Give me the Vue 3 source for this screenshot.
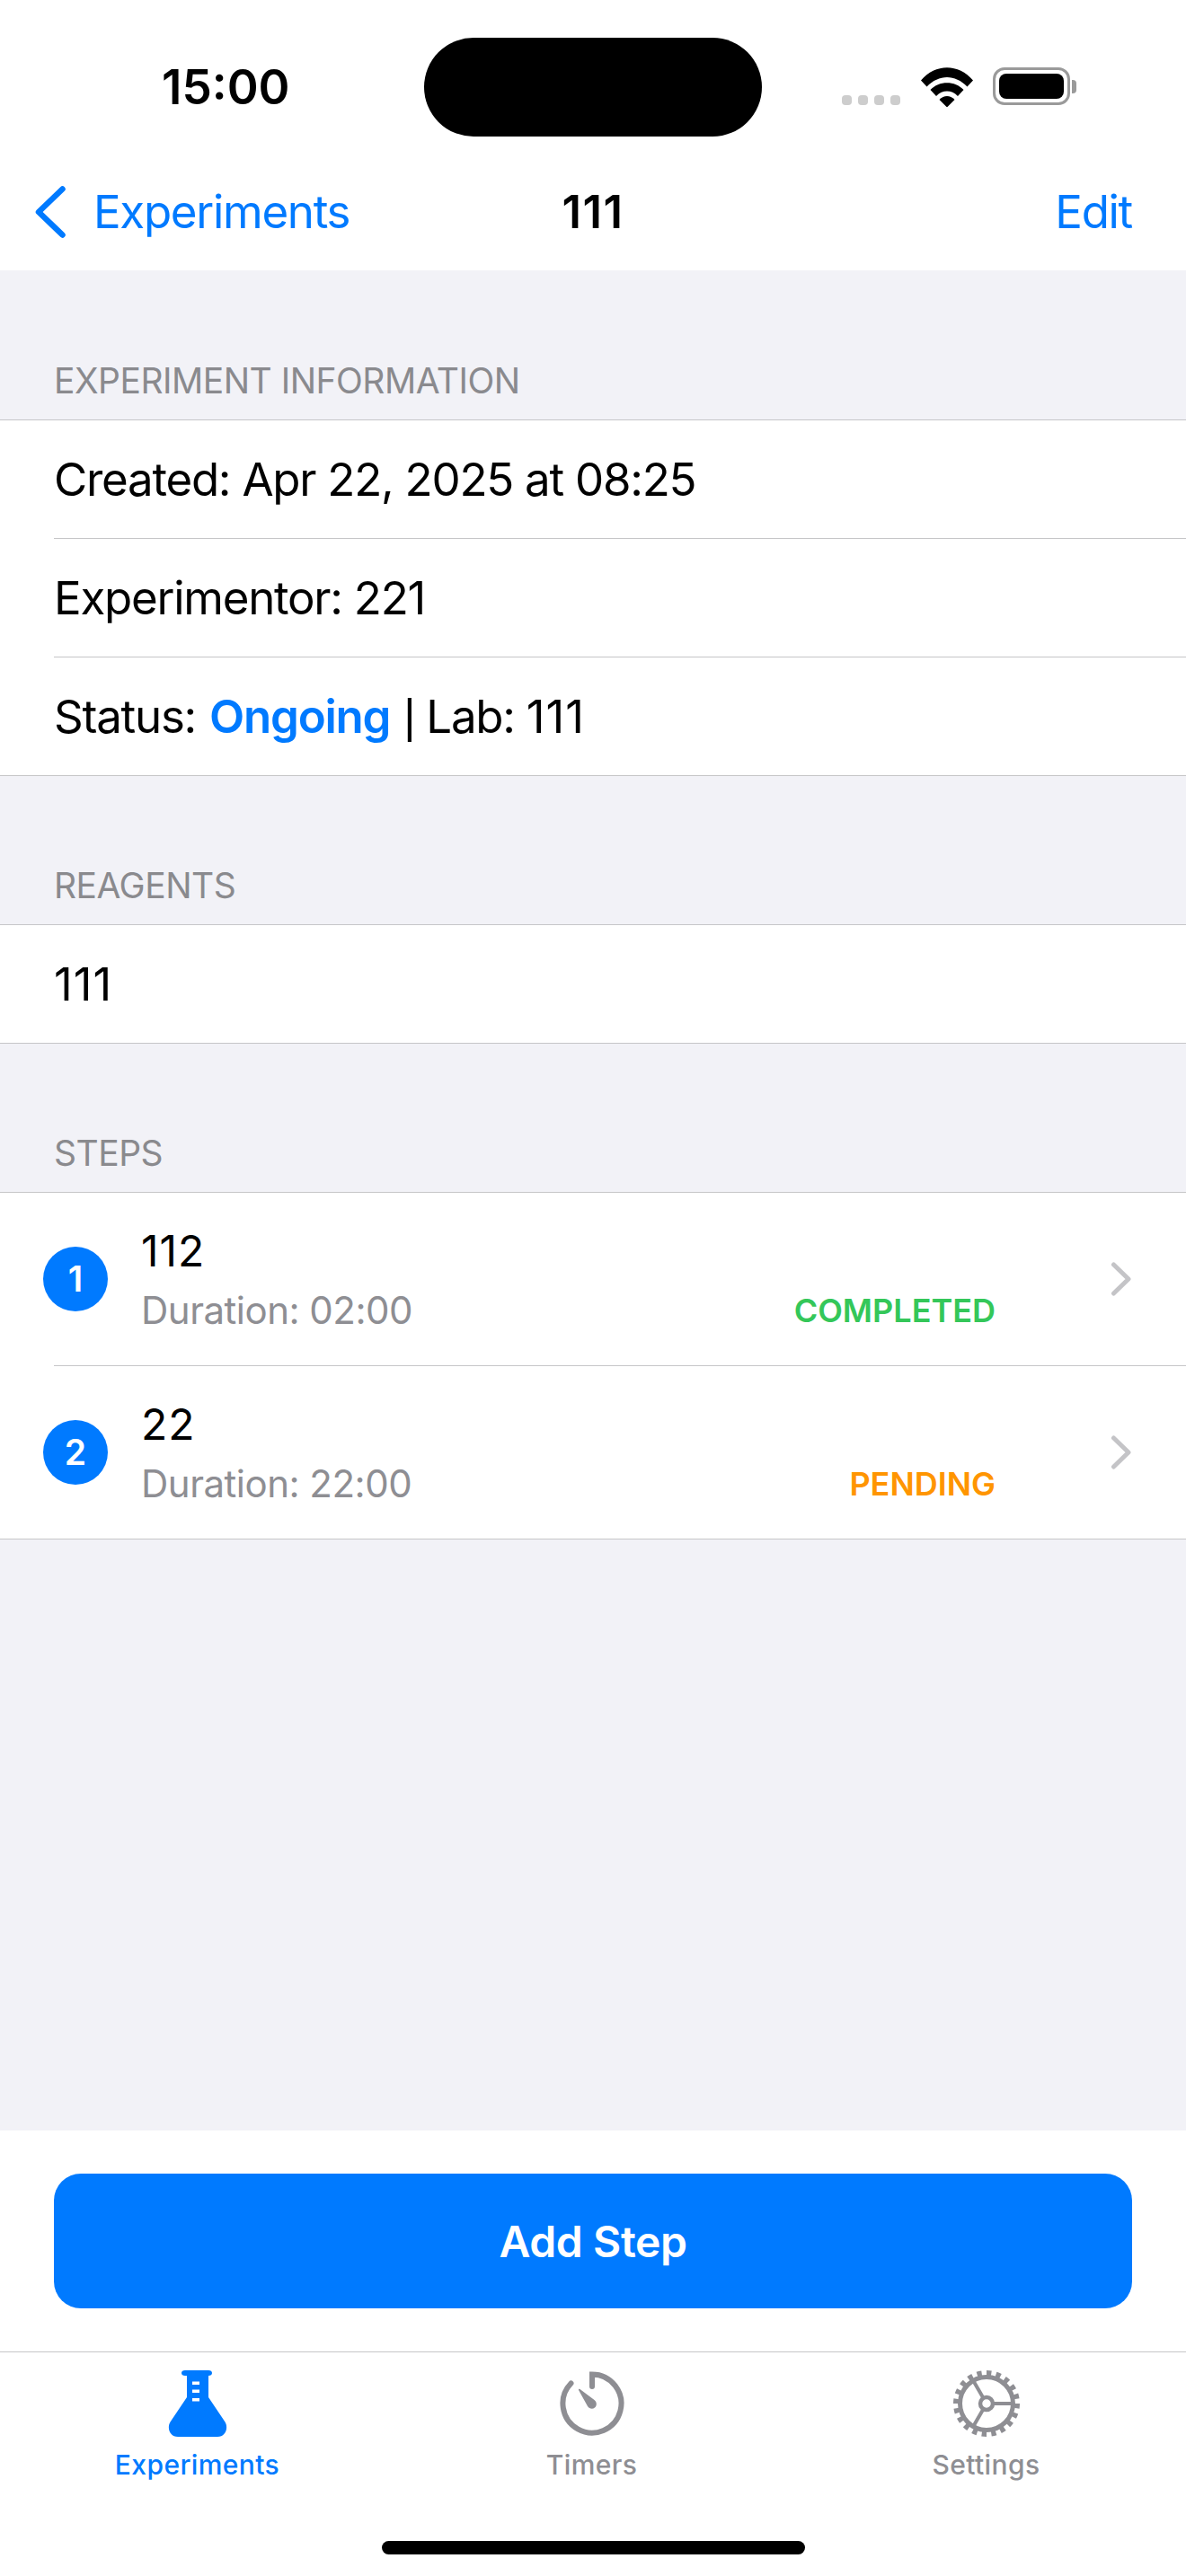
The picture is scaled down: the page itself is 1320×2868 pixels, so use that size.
<template>
  <div class="screen">
    <div class="island"></div>

    <header class="top">
      <div class="status">
        <span class="time">15:00</span>
        <div class="status-icons">
          <div class="dots"><i></i><i></i><i></i><i></i></div>
          <svg class="wifi" viewBox="0 0 58 44" width="58" height="44">
            <path d="M0 14.500 C16 -4.500 42 -4.500 58 14.500 L51.500 21.500 C38 7.500 20 7.500 6.500 21.500Z" />
            <path d="M10.500 25 C20 14.500 38 14.500 47.500 25 L41 32 C34 24.800 24 24.800 17 32Z" />
            <path d="M20.500 36 C25.500 30.500 32.500 30.500 37.500 36 L29 44.500Z" />
          </svg>
          <div class="battery">
            <div class="battery-body"><div class="battery-fill"></div></div>
            <div class="battery-cap"></div>
          </div>
        </div>
      </div>
      <nav class="navbar">
        <div class="back">
          <svg viewBox="0 0 36 58" width="36" height="58">
            <path d="M31.500 3.500 L5 29 L31.500 54.500" fill="none" stroke="#007aff" stroke-width="6.500" stroke-linecap="round" stroke-linejoin="round" />
          </svg>
          <span>Experiments</span>
        </div>
        <div class="nav-title">111</div>
        <div class="nav-edit">Edit</div>
      </nav>
    </header>

    <main class="content">
      <section class="section">
        <h2 class="section-title">EXPERIMENT INFORMATION</h2>
        <div class="group">
          <div class="row">Created: Apr 22, 2025 at 08:25</div>
          <div class="row">Experimentor: 221</div>
          <div class="row">Status:&nbsp;<strong class="ongoing">Ongoing</strong>&nbsp;<span class="pipe">|</span>&nbsp;Lab:&nbsp;<span class="ones">111</span></div>
        </div>
      </section>

      <section class="section">
        <h2 class="section-title">REAGENTS</h2>
        <div class="group">
          <div class="row ones">111</div>
        </div>
      </section>

      <section class="section">
        <h2 class="section-title">STEPS</h2>
        <div class="group">
          <div v-for="step in steps" :key="step.n" class="step">
            <div class="step-num">{{ step.n }}</div>
            <div class="step-body">
              <div class="step-name">{{ step.name }}</div>
              <div class="step-meta">
                <span class="step-duration">Duration: {{ step.duration }}</span>
                <span class="step-state" :class="step.state.toLowerCase()">{{ step.state }}</span>
              </div>
            </div>
            <svg class="step-chevron" viewBox="0 0 24 38" width="24" height="38">
              <path d="M3.500 3 L20 19 L3.500 35" fill="none" stroke="#c4c4c7" stroke-width="5" stroke-linecap="round" stroke-linejoin="round" />
            </svg>
          </div>
        </div>
      </section>
    </main>

    <div class="action">
      <button class="add-step">Add Step</button>
    </div>

    <footer class="tabbar">
      <div class="tab active">
        <svg viewBox="0 0 66 74" width="66" height="74">
          <path fill="#007aff" fill-rule="evenodd" d="M19 0 H45 C47.500 0 49 1.300 49 3 C49 4.700 47.500 6 45 6 V30 L63.500 57.500 C67.500 64 64 74 55 74 H11 C2 74 -1.500 64 2.500 57.500 L21 30 V6 H19 C16.500 6 15 4.700 15 3 C15 1.300 16.500 0 19 0Z M27 12.500 H35 V16 H27Z M27 21.500 H35 V25 H27Z M27 31 H35 V34.500 H27Z" />
        </svg>
        <span>Experiments</span>
      </div>
      <div class="tab">
        <svg viewBox="0 0 72 72" width="72" height="72">
          <path d="M12.500 13.500 A32.500 32.500 0 1 0 36 3.500 V17" fill="none" stroke="#8e8e93" stroke-width="6" stroke-linecap="round" />
          <path d="M21 21 C20.700 20 21.700 19.400 22.500 20 L38.500 32 C41.500 34.500 41.500 38.500 39 40.500 C36.500 42.500 33 42 31 39Z" fill="#8e8e93" />
        </svg>
        <span>Timers</span>
      </div>
      <div class="tab">
        <svg viewBox="0 0 76 76" width="76" height="76">
          <circle cx="38" cy="38" r="34" fill="none" stroke="#8e8e93" stroke-width="6" pathLength="40" stroke-dasharray="1 1" />
          <circle cx="38" cy="38" r="29.500" fill="none" stroke="#8e8e93" stroke-width="5" />
          <circle cx="38" cy="38" r="7" fill="none" stroke="#8e8e93" stroke-width="4.500" />
          <path d="M45 38 H67 M34.500 31.900 L23.500 12.900 M34.500 44.100 L23.500 63.100" fill="none" stroke="#8e8e93" stroke-width="4" />
        </svg>
        <span>Settings</span>
      </div>
      <div class="home-indicator"></div>
    </footer>
  </div>
</template>

<script setup>
const steps = [
  { n: 1, name: '112', duration: '02:00', state: 'COMPLETED' },
  { n: 2, name: '22', duration: '22:00', state: 'PENDING' }
]
</script>

<style>
html,
body {
  margin: 0;
  background: #fff;
}
</style>

<style scoped>
.screen {
  position: relative;
  width: 1320px;
  height: 2868px;
  display: flex;
  flex-direction: column;
  overflow: hidden;
  background: #f2f2f7;
  color: #000;
  font-family: Inter, "Noto Sans", sans-serif;
}

.island {
  position: absolute;
  left: 472px;
  top: 42px;
  width: 376px;
  height: 110px;
  border-radius: 55px;
  background: #000;
}

.top {
  height: 301px;
  background: #fff;
  flex-shrink: 0;
}

.status {
  height: 170px;
  display: flex;
  justify-content: space-between;
  padding: 0 122px 0 180px;
  box-sizing: border-box;
}

.time {
  margin-top: 65px;
  font-size: 53px;
  line-height: 64px;
  font-weight: 600;
}

.status-icons {
  display: flex;
  align-items: flex-start;
  padding-top: 75px;
}

.dots {
  display: flex;
  gap: 7px;
  margin-top: 31px;
  margin-right: 23px;
}

.dots i {
  width: 11px;
  height: 11px;
  border-radius: 4px;
  background: #cdcdcd;
}

.wifi {
  fill: #000;
  margin-right: 22px;
}

.battery {
  display: flex;
  align-items: center;
}

.battery-body {
  width: 86px;
  height: 42px;
  box-sizing: border-box;
  border: 3px solid #9a9a9a;
  border-radius: 13px;
  padding: 4px;
}

.battery-fill {
  height: 100%;
  border-radius: 8px;
  background: #000;
}

.battery-cap {
  width: 5px;
  height: 15px;
  margin-left: 2px;
  border-radius: 0 4px 4px 0;
  background: #9a9a9a;
}

.navbar {
  height: 131px;
  display: grid;
  grid-template-columns: 1fr auto 1fr;
  align-items: center;
  padding: 0 60px;
  font-size: 51px;
  letter-spacing: -1.3px;
  color: #007aff;
}

.back {
  display: flex;
  align-items: center;
  gap: 30px;
  margin-left: -22px;
}

.nav-title {
  color: #000;
  font-weight: 600;
  letter-spacing: 1.5px;
}

.nav-edit {
  text-align: right;
}

.content {
  flex: 1;
  padding-top: 99px;
}

.section {
  margin-bottom: 98px;
}

.section-title {
  margin: 0;
  padding: 0 60px;
  height: 67px;
  font-size: 39px;
  line-height: 48px;
  font-weight: 400;
  letter-spacing: -0.5px;
  color: #8a8a8e;
}

.group {
  background: #fff;
  border-top: 1px solid #c6c6c8;
  border-bottom: 1px solid #c6c6c8;
}

.row {
  display: flex;
  align-items: center;
  height: 131px;
  margin-left: 60px;
  font-size: 51px;
  letter-spacing: -1.25px;
  white-space: pre;
}

.row + .row {
  border-top: 1px solid #c6c6c8;
}

.ones,
.row.ones {
  letter-spacing: 1px;
}

.ongoing {
  color: #007aff;
  font-weight: 600;
  margin-left: 2px;
}

.pipe {
  font-family: "Liberation Sans", sans-serif;
  margin-left: 2px;
}

.step {
  position: relative;
  display: flex;
  align-items: center;
  height: 192px;
  padding: 0 60px 0 48px;
}

.step + .step {
  border-top: 1px solid #c6c6c8;
}

.step + .step::before {
  content: "";
  position: absolute;
  left: 0;
  top: -1px;
  width: 60px;
  height: 1px;
  background: #fff;
}

.step-num {
  flex-shrink: 0;
  width: 72px;
  height: 72px;
  border-radius: 50%;
  background: #007aff;
  color: #fff;
  font-size: 39px;
  font-weight: 600;
  line-height: 72px;
  text-align: center;
}

.step-body {
  flex: 1;
  padding-left: 37px;
  padding-right: 128px;
}

.step-name {
  font-size: 48px;
  line-height: 58px;
  letter-spacing: 1px;
}

.step-meta {
  display: flex;
  justify-content: space-between;
  align-items: center;
  margin-top: 12px;
}

.step-duration {
  font-size: 42px;
  line-height: 50px;
  letter-spacing: -0.5px;
  color: #8e8e93;
}

.step-state {
  font-size: 36px;
  font-weight: 600;
}

.completed {
  color: #34c759;
}

.pending {
  color: #ff9500;
}

.action {
  flex-shrink: 0;
  background: #fff;
  padding: 48px 60px;
}

.add-step {
  display: block;
  width: 100%;
  height: 150px;
  border: 0;
  border-radius: 30px;
  background: #007aff;
  color: #fff;
  font-family: inherit;
  font-size: 48px;
  font-weight: 600;
  letter-spacing: -0.4px;
}

.tabbar {
  position: relative;
  flex-shrink: 0;
  height: 249px;
  display: grid;
  grid-template-columns: repeat(3, 1fr);
  padding-right: 3px;
  background: #fff;
  border-top: 1px solid #c6c6c8;
}

.tab {
  display: flex;
  flex-direction: column;
  align-items: center;
  padding-top: 19px;
  color: #8e8e93;
  font-size: 30px;
  line-height: 36px;
  font-weight: 500;
  letter-spacing: 0.4px;
}

.tab svg {
  height: 76px;
  margin-bottom: 12px;
}

.tab.active {
  color: #007aff;
}

.home-indicator {
  position: absolute;
  left: 425px;
  bottom: 24px;
  width: 471px;
  height: 15px;
  border-radius: 8px;
  background: #000;
}
</style>
